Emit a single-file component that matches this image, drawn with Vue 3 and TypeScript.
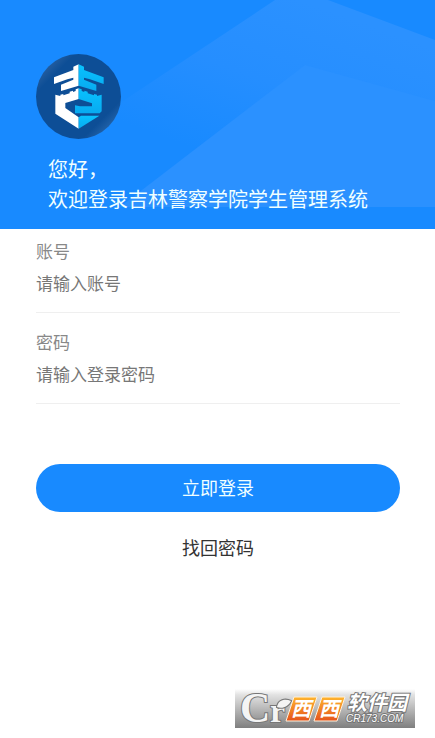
<script setup lang="ts">
import { ref } from 'vue'

const account = ref<string>('')
const password = ref<string>('')
</script>

<template>
  <main class="page">
    <header class="hero">
      <svg class="hero-art" viewBox="0 0 435 229" preserveAspectRatio="none" aria-hidden="true">
        <defs>
          <linearGradient id="ridge" gradientUnits="userSpaceOnUse" x1="300" y1="0" x2="240" y2="165">
            <stop offset="0" stop-color="#2b91ff" />
            <stop offset="0.5" stop-color="#258eff" />
            <stop offset="1" stop-color="#188aff" />
          </linearGradient>
        </defs>
        <path d="M275 0H328L435 40V207H60L120 103Z" fill="url(#ridge)" />
        <path d="M305 65L435 101V207H120L142 190Z" fill="#2b91ff" />
      </svg>
      <svg class="logo" viewBox="0 0 255 255" aria-hidden="true">
        <defs>
          <linearGradient id="disc" x1="0" y1="0" x2="1" y2="1">
            <stop offset="0.14" stop-color="#245d9f" />
            <stop offset="0.23" stop-color="#0d4e96" />
            <stop offset="0.77" stop-color="#0d4e96" />
            <stop offset="0.87" stop-color="#2363a9" />
          </linearGradient>
          <linearGradient id="cyan" x1="0" y1="0" x2="0" y2="1">
            <stop offset="0" stop-color="#08c2ff" />
            <stop offset="1" stop-color="#08aaf0" />
          </linearGradient>
        </defs>
        <circle cx="127.5" cy="127.5" r="127.5" fill="url(#disc)" />
        <path d="M128 31L112 38V48L54 70V90L94 76L112 71V77L75 92V111L128 95Z" fill="#fff" />
        <path d="M128 31L144 38V48L203 70V90L162 76L144 71V77L181 92V111L128 95Z" fill="url(#cyan)" />
        <path
          d="M128 103L119 106V111L111 114V110L101 113V118L82 124V120L73 122V126L58 122V179L128 224V190L88 162V147L128 135Z"
          fill="#fff"
        />
        <path
          d="M128 103L137 106V111L145 114V110L155 113V118L174 124V120L183 122V126L197 122V172L191 178H117V154L132 157H168V148L128 135Z"
          fill="url(#cyan)"
        />
        <path d="M128 190L135 185H190L128 224Z" fill="url(#cyan)" />
      </svg>
      <h1 class="greeting">您好，<br />欢迎登录吉林警察学院学生管理系统</h1>
    </header>

    <form class="form" @submit.prevent>
      <div class="field">
        <label for="account">账号</label>
        <input id="account" v-model="account" type="text" placeholder="请输入账号" autocomplete="username" />
      </div>
      <div class="field">
        <label for="password">密码</label>
        <input
          id="password"
          v-model="password"
          type="password"
          placeholder="请输入登录密码"
          autocomplete="current-password"
        />
      </div>
      <button class="submit" type="submit">立即登录</button>
      <a class="recover" href="#recover">找回密码</a>
    </form>

    <svg class="watermark" viewBox="0 0 180 39" role="img" aria-label="西西软件园 CR173.COM">
      <defs>
        <linearGradient id="plate" x1="0" y1="0" x2="0" y2="1">
          <stop offset="0" stop-color="#fff" />
          <stop offset="0.15" stop-color="#e2e2e2" />
          <stop offset="1" stop-color="#7f7f7f" />
        </linearGradient>
        <linearGradient id="amber" x1="0" y1="0" x2="0" y2="1">
          <stop offset="0" stop-color="#ffb52e" />
          <stop offset="1" stop-color="#e5531c" />
        </linearGradient>
      </defs>
      <rect width="180" height="39" fill="url(#plate)" />
      <g class="mark">
        <text x="5" y="33" font-size="42">C</text>
        <text x="35" y="33" font-size="34">r</text>
        <path d="M42 18C43 11 50 9 56 12C53 18 47 20 42 18Z" />
      </g>
      <path d="M59 8H82L74 32H51Z M87 8H110L102 32H79Z" fill="url(#amber)" stroke="#fff1dc" stroke-width="1" />
      <g class="orange-name">
        <text x="56" y="27">西</text>
        <text x="84" y="27">西</text>
      </g>
      <text class="park" x="112" y="21">软件园</text>
      <text class="domain" x="111" y="33">CR173.COM</text>
    </svg>
  </main>
</template>

<style>
body {
  margin: 0;
  background: #fff;
}
</style>

<style scoped>
.page {
  position: relative;
  display: flex;
  flex-direction: column;
  min-height: 100vh;
  box-sizing: border-box;
  background: #fff;
  font-family: "Noto Sans CJK SC", "Noto Sans", sans-serif;
}

.hero {
  position: relative;
  padding: 54px 36px 15px;
  background: #188aff;
}

.hero-art {
  position: absolute;
  inset: 0;
  width: 100%;
  height: 100%;
}

.logo {
  position: relative;
  display: block;
  width: 85px;
  height: 85px;
}

.greeting {
  position: relative;
  margin: 15px 0 0;
  padding-left: 12px;
  color: #f0ffff;
  font-size: 20px;
  font-weight: 400;
  line-height: 30px;
  white-space: nowrap;
}

.form {
  display: flex;
  flex-direction: column;
  padding: 10px 35px 0 36px;
}

.field {
  display: flex;
  flex-direction: column;
  margin-bottom: 17px;
  padding-bottom: 11px;
  border-bottom: 1px solid #efefef;
}

.field label {
  color: #888;
  font-size: 17px;
  line-height: 24px;
}

.field input {
  width: 100%;
  height: 38px;
  padding: 0;
  border: 0;
  outline: 0;
  background: transparent;
  color: #333;
  font-family: inherit;
  font-size: 17px;
}

.field input::placeholder {
  color: #777;
  opacity: 1;
}

.submit {
  height: 48px;
  margin-top: 43px;
  padding: 0 0 2px;
  border: 0;
  border-radius: 24px;
  background: #188aff;
  color: #f0ffff;
  font-family: inherit;
  font-size: 18px;
  cursor: pointer;
}

.recover {
  align-self: center;
  margin-top: 23px;
  color: #333;
  font-size: 18px;
  line-height: 24px;
  text-decoration: none;
}

.watermark {
  position: absolute;
  right: 20px;
  bottom: 10px;
  width: 180px;
  height: 39px;
  overflow: visible;
}

.mark {
  fill: #f4f4f4;
  stroke: #777;
  stroke-width: 2;
  paint-order: stroke;
  font-family: "Liberation Serif", serif;
  font-weight: 700;
}

.orange-name {
  fill: #fff;
  font-size: 20px;
  font-style: italic;
  font-weight: 700;
}

.park {
  fill: #fff;
  stroke: #777;
  stroke-width: 2;
  paint-order: stroke;
  font-size: 20px;
  font-style: italic;
  font-weight: 700;
}

.domain {
  fill: #fff;
  stroke: #777;
  stroke-width: 2;
  paint-order: stroke;
  font-family: "Liberation Sans", sans-serif;
  font-size: 10px;
  font-style: italic;
}
</style>
